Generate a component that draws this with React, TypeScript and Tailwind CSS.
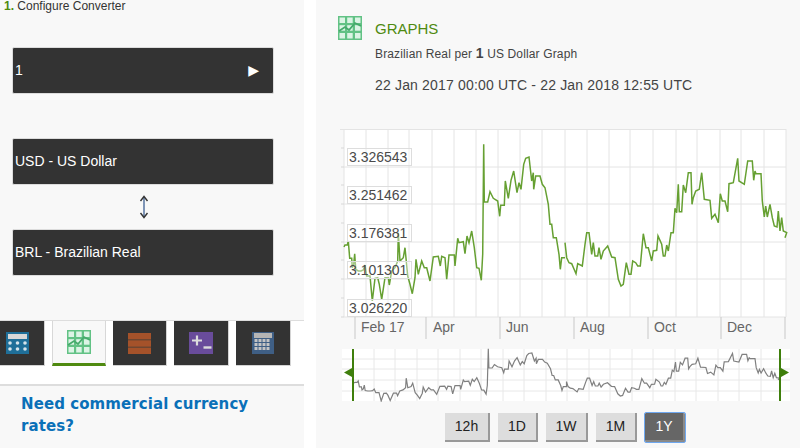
import type { ReactNode } from 'react';

// chart traces read off the picture, in 3x crop coordinates
const LINE_A = [27,378,30,372,37,372,40,360,44,412,50,412,52,440,56,430,59,398,62,445,70,450,78,450,85,447,90,432,95,465,105,465,112,540,120,472,128,470,133,490,140,535,150,470,160,470,163,492,170,450,180,440,188,420,190,335,195,420,205,410,210,380,218,465,225,490,232,518,240,470,243,415,250,460,260,420,268,440,275,440,285,480,295,408,310,406,316,435,320,406,330,410,335,475,342,402,358,402,360,435,368,352,372,365,385,362,390,398,396,345,402,365,410,330,418,380,425,440,432,442,439,478,443,400,446,70,448,243,458,243,465,212,475,232,488,240,494,286,497,253,508,253,511,180,520,232,528,178,536,150,546,215,552,185,558,205,566,130,572,112,582,108,590,180,595,155,596,205,602,165,615,165,622,190,630,200,640,250,645,310,650,310,655,350,664,350,672,400,676,445,680,410,690,410];
const LINE_B = [0,365,5,410,12,425,20,428,33,458,38,428,52,435,60,370,65,335,72,335,80,400,85,365,90,405,98,405,102,380,108,415,115,390,128,375,140,408,150,410,160,475,168,495,175,490,184,425,192,460,198,460,203,420,212,425,218,435,226,435,235,338,243,380,250,380,260,420,265,390,275,388,279,345,290,370,295,405,300,405,305,372,310,390,318,335,325,335,330,262,335,275,340,190,343,272,350,272,355,192,362,215,370,155,378,155,381,250,385,230,392,210,403,205,410,155,418,235,435,238,440,292,450,280,460,305,466,218,472,240,480,240,488,272,492,188,505,185,518,112,522,180,538,190,548,120,562,120,566,178,570,150,573,158,588,158,592,240,598,288,602,255,607,288,615,250,622,290,628,315,636,318,640,270,645,330,650,290,655,330,665,335,660,350];

function toXY(raw: number[], ox: number, oy: number) {
  const out: [number, number][] = [];
  for (let i = 0; i < raw.length; i += 2) {
    out.push([ox + raw[i] / 3, oy + raw[i + 1] / 3]);
  }
  return out;
}

const join = (pts: [number, number][]) => pts.map(([x, y]) => `${x.toFixed(1)},${y.toFixed(1)}`).join(' ');

const MAIN_A = toXY(LINE_A, 335, 120);
const MAIN_B = toXY(LINE_B, 565, 120);
// the navigator shows the same series, squeezed
const NAV_LINE = [...MAIN_A, ...MAIN_B].map(([x, y]): [number, number] => [
  354 + ((x - 344) * 425) / 442,
  347.7 + ((y - 143) * 52.3) / 157,
]);

const GRID_X = [344, 366, 388, 409, 432, 454, 476, 498, 520, 542, 565, 587, 609, 630, 653, 676, 697, 720, 741, 764, 786];
const GRID_Y = [166, 203, 241, 278, 316];
const TICK_Y = [147, 166, 184, 203, 222, 241, 259, 278, 297, 316];
const AXIS_TICKS = [355, 426, 500, 574, 648, 721, 785];
const AXIS_LABELS = [
  { text: 'Feb 17', x: 361 },
  { text: 'Apr', x: 433 },
  { text: 'Jun', x: 506 },
  { text: 'Aug', x: 580 },
  { text: 'Oct', x: 654 },
  { text: 'Dec', x: 727 },
];
const Y_LABELS = [
  { text: '3.326543', y: 147 },
  { text: '3.251462', y: 185 },
  { text: '3.176381', y: 223 },
  { text: '3.101301', y: 260 },
  { text: '3.026220', y: 298 },
];
const NAV_X = [374, 395, 417, 438, 460, 481, 503, 524, 546, 567, 589, 610, 632, 653, 675, 696, 718, 739, 761];
const NAV_Y = [358, 368, 379, 390];
const RANGES = ['12h', '1D', '1W', '1M', '1Y'];

function GraphIcon() {
  return (
    <svg width="24" height="24" viewBox="0 0 24 24" className="shrink-0">
      <rect width="24" height="24" fill="#62c285" />
      {[1.5, 9.2, 17].map((x) =>
        [1.5, 9.2, 17].map((y) => <rect key={`${x}-${y}`} x={x} y={y} width="5.5" height="5.5" fill="#dcf4e5" />)
      )}
      <polyline points="1,15 7,11 11,14 17,7 23,10" fill="none" stroke="#45aa6b" strokeWidth="1.8" />
    </svg>
  );
}

function CalcIcon() {
  return (
    <svg width="23" height="22" viewBox="0 0 23 22">
      <rect width="23" height="22" fill="#1f6f99" />
      <rect x="2" y="2" width="19" height="5" fill="#d8d8d8" />
      {[4, 11.5, 19].map((cx) =>
        [11, 17].map((cy) => <circle key={`${cx}-${cy}`} cx={cx} cy={cy} r="1.8" fill="#d5e3ea" />)
      )}
    </svg>
  );
}

function BarsIcon() {
  return (
    <svg width="23" height="21" viewBox="0 0 23 21">
      <rect width="23" height="21" fill="#6f4630" />
      <rect y="0" width="23" height="6" fill="#a5522a" />
      <rect y="7.5" width="23" height="6" fill="#a5522a" />
      <rect y="15" width="23" height="6" fill="#a5522a" />
    </svg>
  );
}

function PlusMinusIcon() {
  return (
    <svg width="24" height="22" viewBox="0 0 24 22">
      <rect width="24" height="22" fill="#694c9b" />
      <path d="M3 8.5h10M8 3.5v10" stroke="#dcdcdc" strokeWidth="2.2" />
      <path d="M14.5 15.5h8" stroke="#dcdcdc" strokeWidth="2.4" />
    </svg>
  );
}

function CalendarIcon() {
  return (
    <svg width="22" height="22" viewBox="0 0 22 22">
      <rect width="22" height="22" fill="#3f5f85" />
      <rect x="2" y="1" width="18" height="5" fill="#b5b5b5" />
      {[2.5, 6.5, 10.5, 14.5].map((x) =>
        [7, 11, 15].map((y) => <rect key={`${x}-${y}`} x={x} y={y} width="3" height="3" fill="#c4c4c4" />)
      )}
    </svg>
  );
}

function Field({ children }: { children: ReactNode }) {
  return (
    <div className="ml-[12px] flex h-[47px] w-[262px] items-center rounded-[2px] border border-[#dcdcdc] bg-[#333333] pl-[2px] text-[14px] text-white">
      {children}
    </div>
  );
}

function Tab({ width, children }: { width: string; children: ReactNode }) {
  return (
    <div className={`flex h-[45px] items-center justify-center border-r border-b border-[#d4d4d4] bg-[#333333] ${width}`}>
      {children}
    </div>
  );
}

export default function App() {
  return (
    <div className="flex h-[448px] w-[800px] overflow-hidden bg-white font-['Liberation_Sans',Arial,sans-serif] text-[#333333]">
      {/* converter column */}
      <div className="w-[304px] shrink-0 bg-[#f8f8f8]">
        <div className="h-[13px] pl-[4px] text-[12px] leading-[13px]">
          <b className="text-[#4f8a10]">1.</b> Configure Converter
        </div>
        <div className="mt-[34px]">
          <Field>
            <span className="flex-1">1</span>
            <span className="mr-[14px] font-['DejaVu_Sans',sans-serif] text-[14px]">▶</span>
          </Field>
        </div>
        <div className="mt-[44px]">
          <Field>USD - US Dollar</Field>
        </div>
        <div className="flex h-[44px] items-center justify-center pr-[16px]">
          <svg width="12" height="24" viewBox="0 0 12 24">
            <path d="M6 2v20" stroke="#4a6a9a" strokeWidth="1.4" />
            <path d="M2.5 6 6 1.5 9.5 6M2.5 18 6 22.5 9.5 18" fill="none" stroke="#333333" strokeWidth="1.4" />
          </svg>
        </div>
        <Field>BRL - Brazilian Real</Field>

        <div className="mt-[44px] flex h-[66px] gap-[7px] border-t border-b-2 border-[#dddddd] bg-white">
          <div className="-ml-[10px]">
            <Tab width="w-[55px]">
              <CalcIcon />
            </Tab>
          </div>
          <div className="flex h-[45px] w-[54px] items-center justify-center border-x border-b-[3px] border-x-[#d8d8d8] border-b-[#4f8a10] bg-[#f8f8f8]">
            <GraphIcon />
          </div>
          <Tab width="w-[54px]">
            <BarsIcon />
          </Tab>
          <Tab width="w-[55px]">
            <PlusMinusIcon />
          </Tab>
          <Tab width="w-[55px]">
            <CalendarIcon />
          </Tab>
        </div>

        <div className="pt-[7px] pl-[21px] font-['DejaVu_Sans',Verdana,sans-serif] text-[15px] leading-[22px] font-bold tracking-[0.08px] text-[#0a70b8]">
          Need commercial currency
          <br />
          rates?
        </div>
      </div>

      {/* graph column */}
      <div className="ml-[12px] flex-1 bg-[#f8f8f8]">
        <div className="flex pt-[16px] pl-[22px]">
          <GraphIcon />
          <div className="ml-[13px]">
            <div className="pt-[4px] text-[15px] leading-[17px] text-[#4f8a10]">GRAPHS</div>
            <div className="mt-[9px] text-[12px] leading-[14px] tracking-[0.14px] text-[#444444]">
              Brazilian Real per <b className="text-[14px] leading-[14px]">1</b> US Dollar Graph
            </div>
            <div className="mt-[16px] text-[14px] leading-[16px] tracking-[0.17px] text-[#444444]">
              22 Jan 2017 00:00 UTC - 22 Jan 2018 12:55 UTC
            </div>
          </div>
        </div>

        <div className="relative mt-[33px] ml-[24px] h-[215px] w-[450px]">
          <svg width="450" height="215" viewBox="340 125 450 215" className="block">
            <rect x="344" y="128" width="442" height="188" fill="#ffffff" />
            {GRID_X.map((x) => (
              <line key={x} x1={x} x2={x} y1="128" y2="316" stroke="#e4e4e4" strokeWidth="1" />
            ))}
            <line x1="340" x2="786" y1="128.5" y2="128.5" stroke="#e4e4e4" />
            {GRID_Y.map((y) => (
              <line key={y} x1="344" x2="786" y1={y} y2={y} stroke="#e4e4e4" strokeWidth="1" />
            ))}
            {TICK_Y.map((y) => (
              <line key={y} x1="341" x2="344" y1={y} y2={y} stroke="#d8d8d8" />
            ))}
            {AXIS_TICKS.map((x) => (
              <line key={x} x1={x} x2={x} y1="316" y2="338" stroke="#c8c8c8" />
            ))}
            <polyline points={join(MAIN_A)} fill="none" stroke="#66a032" strokeWidth="1.5" />
            <polyline points={join(MAIN_B)} fill="none" stroke="#66a032" strokeWidth="1.5" />
          </svg>
          {Y_LABELS.map((l) => (
            <div
              key={l.text}
              style={{ top: l.y - 125 }}
              className="absolute left-[7px] h-[18px] w-[65px] border border-[#dddddd] bg-white/40 pl-[1px] text-[14px] leading-[17px] text-[#4a4a4a]"
            >
              {l.text}
            </div>
          ))}
          {AXIS_LABELS.map((l) => (
            <span key={l.text} style={{ left: l.x - 340 }} className="absolute top-[193px] text-[14px] leading-[16px] text-[#666666]">
              {l.text}
            </span>
          ))}
        </div>

        <div className="mt-[7px] ml-[26px] h-[54px] w-[448px]">
          <svg width="448" height="54" viewBox="342 347 448 54" className="block">
            <rect x="342" y="348" width="448" height="52" fill="#ffffff" />
            {NAV_X.map((x) => (
              <line key={x} x1={x} x2={x} y1="348" y2="400" stroke="#e8e8e8" />
            ))}
            {NAV_Y.map((y) => (
              <line key={y} x1="342" x2="790" y1={y} y2={y} stroke="#e8e8e8" />
            ))}
            <polyline points={join(NAV_LINE)} fill="none" stroke="#808080" strokeWidth="1.2" />
            <rect x="352" y="348" width="2" height="52" fill="#3f7f0c" />
            <rect x="779" y="348" width="2" height="52" fill="#3f7f0c" />
            <path d="M344 371.5 352 367v9zM789 371.5 781 367v9z" fill="#3f7f0c" />
          </svg>
        </div>

        <div className="mt-[11px] ml-[129px] flex gap-[8px]">
          {RANGES.map((r, i) => (
            <button
              key={r}
              className={
                r === '1Y'
                  ? 'h-[29px] w-[40px] rounded-[1px] border-r-2 border-b-2 border-[#8a8a8a] bg-[#666666] text-[14px] text-white outline outline-[#6fa8f0]'
                  : `h-[29px] border-r-2 border-b-2 border-[#999999] bg-[#dddddd] text-[14px] text-[#222222] ${i === 0 ? 'w-[45px]' : i === 1 ? 'w-[40px]' : i === 2 ? 'w-[42px]' : 'w-[41px]'}`
              }
            >
              {r}
            </button>
          ))}
        </div>
      </div>
    </div>
  );
}
